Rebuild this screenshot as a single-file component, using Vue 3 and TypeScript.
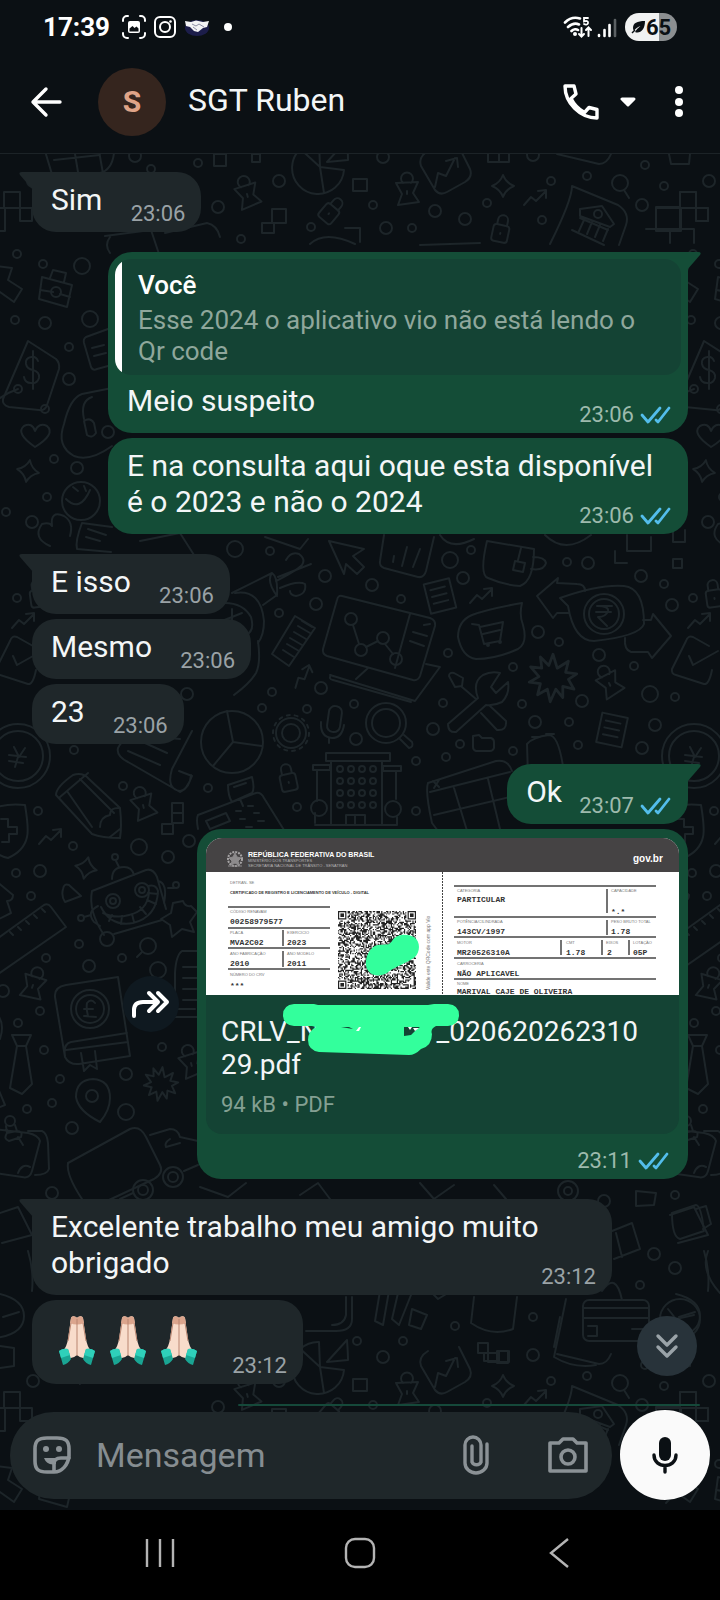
<script setup lang="ts">
interface Message {
  id: number
  side: 'in' | 'out'
  kind: 'plain' | 'quote' | 'emoji' | 'doc'
  first?: boolean
  text: string
  time: string
}

const messages: Message[] = [
  { id: 1, side: 'in', kind: 'plain', first: true, text: 'Sim', time: '23:06' },
  { id: 2, side: 'out', kind: 'quote', first: true, text: 'Meio suspeito', time: '23:06' },
  { id: 3, side: 'out', kind: 'plain', text: 'E na consulta aqui oque esta disponível é o 2023 e não o 2024', time: '23:06' },
  { id: 4, side: 'in', kind: 'plain', first: true, text: 'E isso', time: '23:06' },
  { id: 5, side: 'in', kind: 'plain', text: 'Mesmo', time: '23:06' },
  { id: 6, side: 'in', kind: 'plain', text: '23', time: '23:06' },
  { id: 7, side: 'out', kind: 'plain', first: true, text: 'Ok', time: '23:07' },
  { id: 8, side: 'out', kind: 'doc', text: '', time: '23:11' },
  { id: 9, side: 'in', kind: 'plain', first: true, text: 'Excelente trabalho meu amigo muito obrigado', time: '23:12' },
  { id: 10, side: 'in', kind: 'emoji', text: '', time: '23:12' },
]

type Dot = [number, number, number]
const dots: Dot[] = [
  [135, 155, 6], [151, 168, 4], [198, 162, 4], [279, 180, 6], [218, 206, 6], [311, 226, 4], [241, 238, 4],
  [383, 156, 6], [373, 204, 4], [435, 210, 6], [465, 218, 6], [487, 202, 4], [551, 180, 4], [587, 175, 4],
  [542, 219, 4], [386, 227, 6], [412, 227, 4], [533, 154, 6], [645, 164, 4], [664, 185, 4], [642, 204, 6],
  [17, 253, 4], [43, 263, 4], [82, 265, 8], [15, 319, 4], [45, 322, 6], [90, 318, 8], [69, 346, 4], [69, 378, 6],
  [45, 408, 4], [54, 458, 4], [77, 467, 6], [47, 496, 4], [6, 511, 4], [32, 521, 6], [33, 180, 6],
  [235, 548, 8], [270, 550, 4], [325, 575, 6], [372, 584, 6], [401, 598, 4], [316, 603, 6], [279, 612, 4],
  [450, 559, 8], [471, 549, 4], [463, 577, 6], [567, 561, 4], [588, 562, 6], [641, 575, 6], [664, 583, 4],
  [672, 604, 6], [17, 597, 4], [538, 631, 6], [559, 641, 4], [599, 654, 6], [634, 665, 4], [448, 652, 4],
  [513, 666, 4], [650, 693, 8], [675, 696, 4], [582, 700, 6], [522, 703, 4], [535, 721, 6], [569, 721, 4],
  [655, 724, 6], [578, 744, 4], [642, 747, 6], [443, 702, 4], [433, 728, 6], [460, 743, 4], [446, 756, 4],
  [513, 750, 4], [416, 760, 4], [416, 810, 4], [354, 703, 4], [356, 738, 6], [307, 708, 4], [262, 707, 4],
  [272, 691, 4], [321, 687, 6], [297, 806, 4], [187, 693, 6], [208, 787, 4], [74, 749, 4], [123, 785, 4], [38, 810, 4],
  [73, 845, 4], [139, 846, 8], [168, 856, 6], [189, 840, 6], [16, 872, 4], [40, 870, 6], [31, 895, 4],
  [79, 943, 4], [46, 957, 4], [89, 965, 6], [122, 957, 4], [158, 969, 8], [3, 990, 6], [40, 1010, 4],
  [18, 1022, 4], [44, 1049, 4], [162, 1046, 4], [60, 1078, 4], [52, 1102, 4], [27, 1108, 4], [126, 1073, 6],
  [126, 1111, 8], [72, 1127, 6], [52, 1192, 6], [640, 1284, 4], [654, 1253, 6], [675, 1267, 6], [675, 1194, 4],
  [604, 1200, 6], [533, 1316, 4], [455, 1325, 4], [403, 1340, 4], [357, 1340, 4],
]

interface Place { use: string; x: number; y: number; r: number; s: number }
const places: Place[] = [
  { use: 'clip', x: 247, y: 193, r: -15, s: 1 }, { use: 'clip', x: 407, y: 190, r: 0, s: 1 },
  { use: 'clip', x: 609, y: 682, r: -25, s: 1 }, { use: 'clip', x: 143, y: 804, r: -15, s: 1 },
  { use: 'clip', x: 33, y: 984, r: 20, s: 1 }, { use: 'clip', x: 191, y: 1062, r: -15, s: 1 },
  { use: 'trend', x: 535, y: 196, r: 0, s: 1 }, { use: 'trend', x: 481, y: 594, r: 0, s: 1 },
  { use: 'trend', x: 23, y: 619, r: 0, s: 1 }, { use: 'trend', x: 302, y: 675, r: -25, s: 1 },
  { use: 'trend', x: 50, y: 835, r: 0, s: 1 }, { use: 'lock', x: 501, y: 229, r: 12, s: 1 },
  { use: 'lock', x: 331, y: 210, r: 40, s: 1 }, { use: 'lock', x: 288, y: 778, r: -12, s: 1 },
  { use: 'lock', x: 38, y: 594, r: -8, s: 1 }, { use: 'spark', x: 503, y: 185, r: 0, s: 1 },
  { use: 'spark', x: 86, y: 867, r: 12, s: 1 }, { use: 'spark', x: 28, y: 470, r: 10, s: 1 },
  { use: 'burst', x: 553, y: 677, r: 0, s: 1.4 }, { use: 'burst', x: 161, y: 1083, r: 5, s: 1 },
  { use: 'note', x: 440, y: 595, r: -14, s: 1 }, { use: 'note', x: 612, y: 729, r: 12, s: 1 },
]

// Repeats of the wallpaper tile, one screen apart in each direction.
const tiles = [[0, 0], [676, 0], [0, 1200], [676, 1200]]

// Deterministic noise for the code area of the document preview.
const QR = 65
let seed = 20241
const cells: string[] = []
for (let y = 0; y < QR; y++) {
  for (let x = 0; x < QR; x++) {
    seed = (seed * 1103515245 + 12345) % 2147483648
    const corner = (x < 8 && y < 8) || (x > QR - 9 && y < 8) || (x < 8 && y > QR - 9)
    if (!corner && seed / 2147483648 < 0.52) cells.push(`M${x} ${y}h1v1h-1z`)
  }
}
const qrPath = cells.join('')
const finders = [[0, 0], [QR - 7, 0], [0, QR - 7]]

const rulesLeft = [69, 90, 110, 131]
const rulesRight = [48, 79, 99, 120, 141]
const labels = [
  [24, 75, 'CÓDIGO RENAVAM'], [24, 96, 'PLACA'], [81, 96, 'EXERCÍCIO'], [24, 117, 'ANO FABRICAÇÃO'],
  [81, 117, 'ANO MODELO'], [24, 138, 'NÚMERO DO CRV'], [251, 54, 'CATEGORIA'], [405, 54, 'CAPACIDADE'],
  [251, 85, 'POTÊNCIA/CILINDRADA'], [405, 85, 'PESO BRUTO TOTAL'], [251, 106, 'MOTOR'], [360, 106, 'CMT'],
  [400, 106, 'EIXOS'], [427, 106, 'LOTAÇÃO'], [251, 127, 'CARROCERIA'], [251, 147, 'NOME'],
] as [number, number, string][]
const values = [
  [24, 86, '00258979577'], [24, 107, 'MVA2C02'], [81, 107, '2023'], [24, 128, '2010'], [81, 128, '2011'],
  [24, 150, '***'], [251, 64, 'PARTICULAR'], [405, 76, '*.*'], [251, 96, '143CV/1997'], [405, 96, '1.78'],
  [251, 117, 'MR20526310A'], [360, 117, '1.78'], [401, 117, '2'], [427, 117, '05P'],
  [251, 138, 'NÃO APLICAVEL'], [251, 156, 'MARIVAL CAJE DE OLIVEIRA'],
] as [number, number, string][]
</script>

<template>
  <div class="phone">
    <div class="status">
      <span class="clock">17:39</span>
      <svg class="s-ic" width="24" height="24" viewBox="0 0 24 24" fill="none" stroke="#fff" stroke-width="2" stroke-linecap="round">
        <path d="M1 6V5a4 4 0 0 1 4-4h1M18 1h1a4 4 0 0 1 4 4v1M23 18v1a4 4 0 0 1-4 4h-1M6 23H5a4 4 0 0 1-4-4v-1" />
        <rect x="6" y="6" width="12" height="12" rx="2" fill="#fff" stroke="none" />
        <path d="M7.500 16.500v-3l3-2.500 2 2 2-1.500 2 2v3z" fill="#0b1014" stroke="none" />
      </svg>
      <svg class="s-ic insta" width="22" height="22" viewBox="0 0 22 22" fill="none" stroke="#fff" stroke-width="2">
        <rect x="1" y="1" width="20" height="20" rx="5" /><circle cx="11" cy="11" r="5" /><circle cx="16.500" cy="5.500" r="1.300" fill="#fff" stroke="none" />
      </svg>
      <svg class="s-ic shake" width="26" height="20" viewBox="0 0 26 20">
        <ellipse cx="13" cy="11" rx="12" ry="8" fill="#1c1d4a" />
        <path d="M1 4l6 1 5-1.500L19 5l6-1-2 6-4 1-5 4-4-1-4-4-4-1z" fill="#f2f2f4" />
        <path d="M8 7l4 2 3-2 5 3M9 10l4 3" stroke="#8d8ea5" fill="none" />
      </svg>
      <span class="dot"></span>
      <span class="grow"></span>
      <svg width="30" height="24" viewBox="0 0 30 24" fill="none" stroke="#fff" stroke-width="2.600" stroke-linecap="round">
        <path d="M2 7.500C7 2.500 12 2 17 3.500M5 12c4-3.500 8-4 11-2.500M8.500 16c2-2 5-2 6.500-1" />
        <circle cx="12" cy="19" r="2" fill="#fff" stroke="none" />
        <path d="M25 3h-4v3.500c3-1.200 4.500 0 4 1.800-.4 1.500-2.500 1.700-4 .7" stroke-width="1.800" />
        <path d="M18.500 13v8M16 19l2.500 2.500L21 19M25.500 21v-8M23 15l2.500-2.500L28 15" stroke-width="2" />
      </svg>
      <svg class="bars" width="20" height="22" viewBox="0 0 20 22" stroke-width="2.600" stroke-linecap="round" stroke="#fff">
        <path d="M2 19v1M7.500 14v6M12.500 9v11" /><path d="M18 4v16" stroke="#5b6063" />
      </svg>
      <span class="battery">
        <svg width="15" height="14" viewBox="0 0 15 14"><path d="M14 1C6 1 2 3 2 8c0 1 .3 2 1 2.800C5 8 7 7 9.500 6 7 8 5.500 9.500 4 12c5 2 10-2 10-11z" fill="#0b1014" /><path d="M1 13l3-3" stroke="#0b1014" stroke-width="1.500" /></svg>65
      </span>
    </div>

    <header class="bar">
      <button class="icon back" aria-label="Voltar">
        <svg width="32" height="32" viewBox="0 0 32 32" fill="none" stroke="#fff" stroke-width="3.400" stroke-linecap="round" stroke-linejoin="round"><path d="M30 16H3M16 3L3 16l13 13" /></svg>
      </button>
      <span class="avatar">S</span>
      <h1 class="name">SGT Ruben</h1>
      <button class="icon call" aria-label="Ligar">
        <svg width="36" height="36" viewBox="0 0 36 36" fill="none" stroke="#fff" stroke-width="3.400" stroke-linejoin="round"><path d="M2 2h9l2 8-5 4.500c3 6 7 10.500 13.500 14l4.500-5 8 2V34C17 34 2 19 2 2z" /></svg>
      </button>
      <button class="icon more" aria-label="Opções de chamada">
        <svg width="16" height="10" viewBox="0 0 16 10"><path d="M2 2h12L8 8z" fill="#fff" stroke="#fff" stroke-width="3" stroke-linejoin="round" /></svg>
      </button>
      <button class="icon" aria-label="Menu">
        <svg width="10" height="34" viewBox="0 0 10 34" fill="#fff"><circle cx="5" cy="5" r="4" /><circle cx="5" cy="17" r="4" /><circle cx="5" cy="28" r="4" /></svg>
      </button>
    </header>

    <main class="chat">
      <svg class="wallpaper" viewBox="0 153 720 1357" preserveAspectRatio="xMidYMin slice" aria-hidden="true">
        <defs>
          <g id="clip"><path d="M-4-8a6 6 0 1 1 8 0M-11-8L11-9 6 2l6 9-21 3 4-11zM0 0v3" /></g>
          <g id="trend"><path d="M-11 8L-4 0 1 4l9-9M3-6l8-1v8" /></g>
          <g id="lock"><rect x="-8" y="-5" width="16" height="17" rx="3" /><path d="M-5-5v-5a5 5 0 0 1 10 0v5M0 3v1" /></g>
          <g id="spark"><path d="M0-11Q3-3 11 0 3 3 0 11-3 3-11 0-3-3 0-11z" /></g>
          <g id="burst"><path d="M0-17l3 10 8-5-2 8 8 1-6 4 4 7-8-2 0 8-5-6-4 9-2-9-7 4 2-8-8-1 7-4-6-7 8 1-1-8 6 6z" /></g>
          <g id="note"><path d="M-13-15L13-15V15H-13zM-8-8H7M-8-1H7M-8 6H7" /></g>
          <g id="tile">
            <circle v-for="(d, i) in dots" :key="i" :cx="d[0]" :cy="d[1]" :r="d[2]" />
            <use v-for="(p, i) in places" :key="'p' + i" :href="'#' + p.use" :transform="`translate(${p.x} ${p.y}) rotate(${p.r}) scale(${p.s})`" />
            <!-- top band -->
            <path d="M45 150l9 30M54 159l46-5M75 153l5 30M99 150l5 28M45 172h55q12-3 14-20" />
            <path d="M319 141a26 26 0 1 0 25 28L320 166zM320 166l4 26M320 166l-24-22M327 161l20-22q1 14 1 20z" />
            <path d="M214 153h12v12h-12zM252 153h8v8h-8zM272 208h14v14h-14zM262 222h12v10h-12zM353 178h14v12h-14zM345 227h15v14" />
            <path d="M428 150q-10 6-7 15l14 24q5 6 12 2l18-10q8-5 5-13l-11-22M435 186l3-14 8 3 9-18M446 160l11-3 1 9M488 150v11h21v-11M499 150v11" />
            <path d="M557 153l42 10q8 0 12-10M669 153l2 10h18l1-10" />
            <circle cx="620" cy="182" r="8" /><path d="M624 189l5 8" />
            <path d="M572 185q0 14-22 58M572 185l46 19q12 8 8 20l-7 20M580 208l22-3 12 18-4 3-30-11zM580 217l28 12M584 219l-5 11M592 221l-5 12M600 224l-5 12M608 228l-5 12M572 229l32 15" />
            <circle cx="598" cy="213" r="4" />
            <path d="M4 191h16v16H4zM20 207h12v13H20zM-20 207h25v23h-25zM656 206h24v22h-24zM680 191h16v16h-16zM646 228h24v14M696 207h12v13h-12zM670 228h24v14" />
            <path d="M105 235l46-6 8 24M110 236q-6 8 0 16M165 232l42-10q10 2 13 14M310 243q15-14 45 0M420 244l60-2" />
            <!-- upper sides -->
            <path d="M42 276l30 8-5 22-28-8zM50 277l3-8 13 3-2 9M40 289l13 2M60 293l10 3" /><circle cx="56" cy="291" r="5" />
            <path d="M-4 265l16 2-4 12 14 9-8 13-14-10-10 11" />
            <path d="M28 340l28 18q4 4 3 10l-12 36q-2 6-8 5L9 406q-7-2-6-8z" /><circle cx="18" cy="388" r="4" /><path d="M18 388Q6 392-4 400" />
            <path d="M38 360q-2-5-7-4-6 1-5 7 1 5 7 6 7 2 6 8-2 6-8 5-6 0-7-6M33 350v38" />
            <path d="M108 328l-22 8q-3 2-2 6l7 24q2 4 6 2l11-3M92 347l12-3M94 355l12-3" />
            <path d="M112 387l-30 6q-12 4-18 30-8 22 10 32 16 6 38-10M92 396q-12 4-8 22M84 420q6-4 10 2l2 10q-4 6-9 2z" /><circle cx="108" cy="431" r="6" />
            <path d="M35 446q-20-14-11-21 8-4 11 5 4-9 12-5 9 8-12 21z" />
            <circle cx="81" cy="500" r="19" /><path d="M66 498q14 14 24-9M73 486l5 4M84 485l2 5" />
            <path d="M50 545q-18-8-8-22 8-2 10 2-2-16 12-10 10 6 6 20M112 526l-30-4q-7 18-5 26l34 3M88 528l18 6M86 536l14 4" />
            <path d="M140 540l40-8 14 22M265 536l35 12 8-10M440 534q10 16 34 4M545 534q20 20 46 0" />
            <!-- centre -->
            <path d="M329 540l35 8-11 7 11 11-7 7-11-10-2 10zM384 534l-4 26q-1 5 4 7l34 9q6 1 8-6l8-34M394 555l-1 6M407 546l-5 19M420 548l-7 18" />
            <path d="M487 540l47 8q0 32-14 37-16-1-32-8-9-3-1-37zM521 547l-3 12M515 560l10 2-2 9-10-2zM533 556q12 0 13 6-2 8-15 6" />
            <path d="M615 550v12h12M627 534v16h24v-14M673 529v12h12v-12M673 558h9v9h-9z" />
            <path d="M232 592l40-20q6 4 5 22l-14 10M272 572q-6 8 5 23M278 576l33-13M276 580q20-10 26-16 4-6-3-11-8-3-13 6M280 587q18-8 25-4 2 10-9 12-6-1-6-5" />
            <path d="M235 592q26-4 29 28 0 14-6 22M225 602q18 0 26 14 4 14-5 18M232 608v28M222 620l20-8M258 640q3 22-2 32-6 10-22 22" />
            <path d="M295 615l20 12-26 38-17-12zM287 643l12 7M290 637l12 7M294 631l12 7M298 625l12 7M302 620l10 6M283 649l11 7" />
            <path d="M342 595l88 22q6 2 5 8l-15 50q-2 5-7 4l-86-24q-5-2-4-7l14-49q1-5 5-4zM410 613l-15 54M413 631l14 4M410 640l14 5M424 624l6-1M368 667l-12 11M330 674l85 26 25-34-14-3M331 674q-3 4 2 5l78 22" />
            <circle cx="351" cy="618" r="6" /><circle cx="361" cy="649" r="6" /><circle cx="383" cy="637" r="6" /><circle cx="396" cy="658" r="6" /><path d="M353 624l6 19M366 646l12-6M385 643l8 10" />
            <path d="M522 602q-34 6-50 12-14 6-14 22 4 20 18 22 20 0 42-10 10-6 5-24-4-10-1-22zM472 623l7 1 5 19 16-3 3-19-23 5M483 633l17-4" /><circle cx="488" cy="644" r="1" /><circle cx="500" cy="641" r="1" />
            <path d="M585 590q0-7-8-7l-20-1 1-5-21 18 16 22 4-5h12M560 597q40-14 64-12 20 2 20 38-4 12-50 17-20 0-26-35zM643 619h8l2-6 18 22-19 22-4-6h-17q-7-2-6-14" />
            <circle cx="604" cy="613" r="20" /><circle cx="604" cy="613" r="15" /><path d="M597 605h15M596 611h15M597 605q12 0 11 5-2 6-10 6l9 9" />
            <path d="M33 645L17 636q-5-2-7 4L-4 668q-1 5 4 6l28 9q5 1 8-14M13 655l4 9 25-14" />
            <path d="M449 675q0-4 5-3l9 5-1 8-7 1zM462 686l14 12M478 697q-6-16 5-23 8-4 17-2l-9 14 5 6 12-11q2 12-6 20-8 4-16 3l-30 27q-8 1-8-8zM481 712l16 17q10 1 9-9l-16-15" />
            <circle cx="232" cy="741" r="31" /><path d="M233 741l-6-31M233 741l29 4M233 741l-20 24" />
            <circle cx="291" cy="732" r="9" /><circle cx="291" cy="732" r="15" /><circle cx="291" cy="732" r="18" stroke-dasharray="3 5" />
            <rect x="328" y="705" width="13" height="26" rx="6" transform="rotate(8 334 718)" /><path d="M321 721q-1 15 11 16 10 0 12-13M329 737v5" />
            <circle cx="386" cy="722" r="20" /><circle cx="386" cy="722" r="14" /><path d="M400 738l9 9q5-1 3-6l-8-7" />
            <path d="M473 735l6-1 3 3h9q3 1 3 4v6q-1 3-4 3h-14q-3-1-3-4zM528 775l-1-32q6-7 22-9 10 0 15 38M532 736h8M546 733h8" />
            <path d="M326 752h64v8h-64zM331 761v62M382 761v62M313 764h17v5h-17zM383 765h18v5h-18zM317 770v30M396 770v28M315 824h82v-8M346 824v-10h19v10M355 814v10M315 812v10" />
            <g v-for="r in 4" :key="r"><circle v-for="c in 4" :key="c" :cx="329 + c * 11" :cy="756 + r * 12" r="3" /></g>
            <circle cx="319" cy="807" r="8" /><circle cx="393" cy="808" r="8" />
            <path d="M428 782l68-22q12-2 16 10M428 782q-3 8 4 40l6 8M430 791l80-20M454 787l14 46M488 778l12 50M434 814l84-20M433 780l6 6M439 779l-5 8" />
            <path d="M228 784l24-8q3 12 0 16l-20 9q-4-6-4-17zM234 786l12-4M240 798l3 7M198 828q-2-10 0-14l58-22q5-1 8 5l20 32M206 820l20-8 4 8-20 8zM236 810h5M248 805h5M240 818h5M254 812h5M258 820h6M246 826h6" />
            <!-- lower left -->
            <circle cx="18" cy="755" r="32" /><circle cx="18" cy="755" r="25" /><path d="M14 746l5 10 6-9M18 756l-3 10M9 754l17 2M9 760l14 2" />
            <path d="M180 738l-34-3q-20-4-28 12-2 8 10 14l52 30q10-4 11-17M128 750l32 14M145 742l22 10M192 730l-20 38q-6 20 8 22 6 0 12-15l-13-5" />
            <path d="M-8 808q14-6 33-4 4 24 2 32-3 14-19 21-10-2-16-10M1 818h7v8h9v7H9v8H2" />
            <path d="M56 794q0-8 17-20 10-3 16 4l31 29q2 18 0 30-18 0-28-4zM60 796l28-24M67 790l25 36M80 778l34 34M100 826q0-10 10-12 0-8 10-7M110 836l10-8" />
            <path d="M172 802h11v20h-11zM172 812h11M162 823h11v10h-11z" />
            <path d="M63 888q1-6 6-4l12 11-16 6q-4-6-2-13zM-4 880l17 14q0 6-6 6l4 12-16 8" />
            <path d="M-6 940l50-36q4-2 7 2l15 20-72 50M10 931l3 3M18 926l3 3M26 920l3 3M34 914l3 3M42 908l3 3" />
            <path d="M92 890l54-21q7-2 11 7l9 32M92 890q-4 20 12 44M114 933l48-14M112 878q0-12 12-12 8 0 10 8M116 860l3 6M98 905q-12 6-4 16l6 4M158 880q10 2 6 22M168 887h6M84 916l7-2" />
            <circle cx="115" cy="856" r="3" /><circle cx="176" cy="884" r="3" /><circle cx="81" cy="917" r="3" /><circle cx="107" cy="938" r="7" /><circle cx="113" cy="900" r="7" /><circle cx="113" cy="900" r="3" /><circle cx="142" cy="889" r="7" /><circle cx="142" cy="889" r="3" />
            <path d="M101 906q10 20 32 16 24-6 25-32-2-7-10-5M103 912q12 6 26 2 18-4 20-22M112 914l-3 6M122 915l-1 8M132 913l2 8M140 906l6 7M147 899l9 4M148 892l10 1" />
            <path d="M183 900q2 6 8 5l6 6-7 10 4 10-12-3-10 8-2-12-9-6 10-6 2-10z" /><circle cx="148" cy="945" r="8" /><path d="M142 951l-5 5" />
            <path d="M118 976l-52 8q-12 2-11 12l10 60q4 8 14 7l51-8zM127 1032l-56 9q-8 2-6 14M66 1049l62-8M81 1052l3 18 6-6 7 4-2-18" /><circle cx="90" cy="1008" r="19" /><circle cx="90" cy="1008" r="14" /><path d="M95 1002q-4-5-8 0-1 5 1 13h-4l12 1M84 1008h9" />
            <path d="M200 950h-18q-6 4-7 22v44h25M183 966h17M183 977h17M183 988h17M183 999h17M175 1008h20" />
            <path d="M12 1034h19l-5 11h-9zM17 1045l-7 42 12 6 10-10-6-38M-6 1010q12 10 6 28M-5 1080l10 24-10 4" />
            <path d="M100 1121q10-12 10-24 0-18-17-19-17 1-17 18 2 14 24 25z" /><circle cx="92" cy="1095" r="6" />
            <circle cx="10" cy="1120" r="5" /><path d="M6 1125l1 7 10-2-2-6M7 1132q-4 6 2 8l12-4q2-6-4-6M18 1136l5 8M-6 1128l34 4q10 2 12 8l-8 30q-2 8-10 6l-28-4M28 1130h14q5 2 6 12l1 26q-2 6-14 6M18 1172q4-10 12-6" />
            <path d="M68 1162l62-34q10-4 16 8l14 28q4 8-6 14l-60 28M68 1162q-2 12 14 36M150 1134l20-6q8 0 10 8l18 4M170 1138q-6 4-4 8l14-4" /><circle cx="143" cy="1189" r="10" /><circle cx="143" cy="1189" r="5" /><circle cx="173" cy="1176" r="10" /><circle cx="173" cy="1176" r="5" />
            <path d="M184 1170l14-6M120 1198l13-6" />
            <!-- lower band -->
            <path d="M200 1186l28 10 18-14M300 1194l18-12 12 16M420 1182l14 16 20-14M494 1184l12 14M636 1190l20 2-2 12-18 1z" /><circle cx="568" cy="1190" r="10" /><circle cx="568" cy="1190" r="4" />
            <path d="M-6 1214l24-8 14 28-30 8M672 1212l24-8q5 0 8 26l-24 8q-8-2-8-26zM696 1208l10-3 5 18-8 5M612 1230l20-8 8 26-26 10M616 1232l6 24" />
            <path d="M0 1293q24 6 24 22 0 18-28 22M3 1316l16-5M0 1345l14 2v18l-14 2M28 1250q6 20 4 40M708 1250q-8 20 12 42" />
            <path d="M380 1290l-5 30 8 4 6-34M398 1292l-6 26 7 6 12-30M412 1308l15 6-6 14-12-4zM474 1296l-3 26q20 14 42 6l4-32M430 1290l8 8 10-6" />
            <path d="M352 1296v22q0 12-16 12h-30M346 1296v18q-2 10-14 10" />
            <rect x="583" y="1299" width="66" height="41" rx="6" /><path d="M583 1307h66M583 1317h66M588 1325h9v10h-9M632 1328h12M602 1290q14-20 20 9M566 1298q-6 30-12 58 20 12 42 8M560 1316l-6 30" />
            <circle cx="680" cy="1318" r="20" /><path d="M668 1308l8 10 18-4" />
            <path d="M478 1342h10v10h-10zM484 1352h13v8h-13zM497 1350h11v12h-11z" />
          </g>
        </defs>
        <g fill="none" stroke="#1d2529" stroke-width="2" stroke-linecap="round" stroke-linejoin="round">
          <use v-for="(t, i) in tiles" :key="i" href="#tile" :x="t[0]" :y="t[1]" />
        </g>
      </svg>

      <section class="list">
        <div v-for="m in messages" :key="m.id" class="row" :class="[m.side, { first: m.first }]">
          <button v-if="m.kind === 'doc'" class="forward" aria-label="Encaminhar">
            <svg width="38" height="28" viewBox="0 0 38 28" fill="none" stroke="#fff" stroke-width="4" stroke-linecap="round" stroke-linejoin="round"><path d="M2 26v-6q0-8 9-8h14M17 3l9 9-9 9M26 3l9 9-9 9" /></svg>
          </button>
          <article class="bubble" :class="[m.side, m.kind, { tail: m.first }]">
            <blockquote v-if="m.kind === 'quote'" class="cite">
              <strong>Você</strong>
              <p>Esse 2024 o aplicativo vio não está lendo o Qr code</p>
            </blockquote>

            <div v-if="m.kind === 'doc'" class="card">
              <svg class="thumb" viewBox="0 0 473 157" role="img" aria-label="Prévia do documento">
                <rect width="473" height="157" fill="#fff" />
                <rect width="473" height="34" fill="#454344" />
                <circle cx="29" cy="21" r="7" fill="none" stroke="#a5a3a4" stroke-width="2" stroke-dasharray="2 1" />
                <path d="M29 15l2 4 4 1-3 3 1 4-4-2-4 2 1-4-3-3 4-1zM22 28h14" fill="#8d8b8c" stroke="#8d8b8c" />
                <g class="sans" fill="#fff">
                  <text x="42" y="19" font-size="7" font-weight="700">REPÚBLICA FEDERATIVA DO BRASIL</text>
                  <g fill="#b5b3b4" font-size="4"><text x="42" y="24">MINISTÉRIO DOS TRANSPORTES</text><text x="42" y="29">SECRETARIA NACIONAL DE TRÂNSITO - SENATRAN</text></g>
                  <text x="427" y="24" font-size="10" font-weight="700">gov.br</text>
                </g>
                <g class="sans" font-size="4" fill="#777">
                  <text x="24" y="46">DETRAN- SE</text>
                  <text x="24" y="56" font-weight="700" fill="#333">CERTIFICADO DE REGISTRO E LICENCIAMENTO DE VEÍCULO - DIGITAL</text>
                  <text v-for="(l, i) in labels" :key="i" :x="l[0]" :y="l[1]">{{ l[2] }}</text>
                  <text transform="translate(224 152) rotate(-90)" font-size="5">Valide este QRCode com app Vio</text>
                </g>
                <g stroke="#444" stroke-width="1.500">
                  <path v-for="y in rulesLeft" :key="y" :d="`M22 ${y}H124`" />
                  <path v-for="y in rulesRight" :key="y" :d="`M248 ${y}H450`" />
                  <path d="M77 92v16M77 113v16M401 51v24M401 82v15M355 102v15M396 102v15M423 102v15" />
                  <path d="M236.500 34V157" stroke-dasharray="2 1" stroke-width="1" />
                </g>
                <g class="mono" font-size="8" font-weight="700" fill="#333">
                  <text v-for="(v, i) in values" :key="i" :x="v[0]" :y="v[1]">{{ v[2] }}</text>
                </g>
                <g transform="translate(132 73) scale(1.200)" fill="#222">
                  <path :d="qrPath" />
                  <g v-for="(f, i) in finders" :key="i" :transform="`translate(${f[0]} ${f[1]})`">
                    <path d="M0 0h7v7H0zM1 1v5h5V1z" fill-rule="evenodd" /><rect x="2" y="2" width="3" height="3" />
                  </g>
                </g>
                <path d="M172 107c8-1 11 1 14-4 4-7 14-8 22-4 7 5 6 15 1 20-7 6-20 9-28 16-9 5-20 2-21-8-1-8 4-19 12-20z" fill="#33ff9c" />
              </svg>
              <div class="file">
                <div class="fname">CRLV_N<span class="hidden"></span>_020620262310<br />29.pdf
                  <svg class="scribble" width="178" height="52" viewBox="0 0 178 52" aria-hidden="true">
                    <path d="M36 22l14-6h60l16 12-10 8H46zM134 21h16" fill="#33ff9c" />
                    <path d="M11 0h20l4 1h110l6-1h14q11 1 11 11t-11 11h-12q-6 3-4 8 0 12-11 15-6 6-12 6l-90-3q-11-2-11-12 0-9 8-13l-4-1H11Q0 21 0 11 0 1 11 0z" fill="#33ff9c" />
                    <path d="M58 23l12 2-4-2zM121 23h16l-4 3-5 5-7 1z" fill="#144334" />
                    <path d="M73 27l3-4h2l-2 4zM125 23h4l-2 3zM130 24h6l-4 3z" fill="#fff" />
                  </svg>
                </div>
                <div class="fsize">94 kB • PDF</div>
              </div>
            </div>

            <div class="body">
              <p v-if="m.kind === 'emoji'" class="text hands" role="img" aria-label="Mãos em oração">
                <svg v-for="n in 3" :key="n" width="51" height="51" viewBox="0 0 51 51">
                  <path d="M20 4q1-3 5-1l1 1 1-1q4-2 5 1l3 21q1 7 5 12l-5 7q-5 1-9-3-4 4-9 3l-5-7q4-5 5-12z" fill="#f8dccb" />
                  <path d="M20 4q1-3 5-1l1 1 1-1q4-2 5 1l1 5q-7 3-14 0z" fill="#dba58d" />
                  <path d="M26 5v37M20 9l-3 18M32 9l3 18" stroke="#b98570" stroke-width="1" fill="none" />
                  <path d="M8 37q4-3 9-2l3 10q-3 5-8 6zM44 37q-4-3-9-2l-3 10q3 5 8 6z" fill="#1aa593" />
                  <path d="M8 37q4-3 9-2l2 6-9 3zM44 37q-4-3-9-2l-2 6 9 3z" fill="#2fd0ba" />
                </svg><span class="space"></span>
              </p>
              <p v-else-if="m.kind !== 'doc'" class="text">{{ m.text }}<span class="space"></span></p>
              <div class="meta">
                <time>{{ m.time }}</time>
                <svg v-if="m.side === 'out'" width="31" height="18" viewBox="0 0 31 18" fill="none" stroke="#53bdeb" stroke-width="2.800" stroke-linecap="round" stroke-linejoin="round" aria-label="Lida"><path d="M2 9l6 7L20 2M16 14l2 2L29 2" /></svg>
              </div>
            </div>
          </article>
        </div>
        <div class="next"></div>
      </section>

      <button class="down" aria-label="Ir para o fim">
        <svg width="24" height="26" viewBox="0 0 24 26" fill="none" stroke="#9aa3a8" stroke-width="3.400" stroke-linecap="round" stroke-linejoin="round"><path d="M3 3l9 9 9-9M3 14l9 9 9-9" /></svg>
      </button>

      <form class="composer" @submit.prevent>
        <div class="pill">
          <button type="button" class="icon" aria-label="Figurinhas">
            <svg width="40" height="40" viewBox="0 0 40 40" fill="none" stroke="#8b9296" stroke-width="3.600" stroke-linecap="round" stroke-linejoin="round">
              <path d="M22 37h-7C6 37 3 34 3 26V14C3 6 6 3 15 3h10c9 0 12 3 12 11v7C36 30 30 37 22 37z" /><path d="M22 36v-7q0-6 7-6h8" />
              <circle cx="14" cy="14" r="3" fill="#8b9296" stroke="none" /><circle cx="27" cy="14" r="3" fill="#8b9296" stroke="none" /><path d="M12 23h12v6q-9 2-12-6z" fill="#8b9296" stroke="none" />
            </svg>
          </button>
          <input class="field" type="text" placeholder="Mensagem" aria-label="Mensagem" />
          <button type="button" class="icon clipbtn" aria-label="Anexar">
            <svg width="26" height="40" viewBox="0 0 26 40" fill="none" stroke="#8b9296" stroke-width="3.400" stroke-linecap="round"><path d="M24 9v19a11 10 0 0 1-22 0V10a8 8 0 0 1 16 0v17a5 5 0 0 1-9 0V11" /></svg>
          </button>
          <button type="button" class="icon" aria-label="Câmera">
            <svg width="40" height="36" viewBox="0 0 40 36" fill="none" stroke="#8b9296" stroke-width="3.600" stroke-linejoin="round"><path d="M2 6h9l4-4h10l4 4h9v28H2z" /><circle cx="20" cy="20" r="7" /></svg>
          </button>
        </div>
        <button type="button" class="mic" aria-label="Gravar áudio">
          <svg width="28" height="38" viewBox="0 0 28 38" fill="none" stroke="#0b1014" stroke-width="3.400" stroke-linecap="round"><rect x="8" y="1" width="12" height="24" rx="6" fill="#0b1014" stroke="none" /><path d="M3 19c0 14 22 14 22 0M14 30v6" /></svg>
        </button>
      </form>
    </main>

    <nav class="nav">
      <button class="icon" aria-label="Recentes"><svg width="30" height="30" viewBox="0 0 30 30" stroke="#b4b4b4" stroke-width="2.400"><path d="M2 1v28M15 1v28M28 1v28" /></svg></button>
      <button class="icon" aria-label="Início"><svg width="32" height="32" viewBox="0 0 32 32" fill="none" stroke="#b4b4b4" stroke-width="2.400"><rect x="2" y="2" width="28" height="28" rx="9" /></svg></button>
      <button class="icon" aria-label="Voltar"><svg width="30" height="30" viewBox="0 0 30 30" fill="none" stroke="#b4b4b4" stroke-width="2.400"><path d="M23 1L6 15l17 14" /></svg></button>
    </nav>
  </div>
</template>

<style>
body {
  margin: 0;
  background: #000;
}
</style>

<style scoped>
.phone {
  min-height: 100vh;
  display: flex;
  flex-direction: column;
  background: #0b1014;
  color: #f3f6f7;
  font-family: Roboto, "Liberation Sans", sans-serif;
}
button {
  padding: 0;
  border: 0;
  background: none;
  font: inherit;
  color: inherit;
}
svg { display: block; }
p, h1, blockquote { margin: 0; }
.icon {
  display: flex;
  align-items: center;
  justify-content: center;
}
.status {
  height: 52px;
  box-sizing: border-box;
  padding: 2px 43px 0 43px;
  display: flex;
  align-items: center;
  color: #fff;
}
.clock {
  font-size: 26px;
  font-weight: 700;
  margin-right: 12px;
}
.insta { margin-left: 8px; }
.shake { margin-left: 8px; }
.dot {
  width: 8px;
  height: 8px;
  border-radius: 50%;
  background: #fff;
  margin-left: 14px;
}
.grow { flex: 1; }
.bars { margin: 0 8px 0 4px; }
.battery {
  display: flex;
  align-items: center;
  justify-content: center;
  width: 52px;
  height: 28px;
  border-radius: 14px;
  background: linear-gradient(90deg, #f1f2f2 65%, #8c8f91 65%);
  color: #0b1014;
  font-size: 22px;
  font-weight: 700;
}
.bar {
  height: 102px;
  box-sizing: border-box;
  display: flex;
  align-items: center;
  padding: 0 36px 2px 30px;
  border-bottom: 1px solid #1c2327;
}
.avatar {
  width: 68px;
  height: 68px;
  border-radius: 50%;
  margin-left: 36px;
  background: #35251e;
  color: #dfa488;
  font-size: 30px;
  font-weight: 700;
  line-height: 68px;
  text-align: center;
}
.name {
  flex: 1;
  margin-left: 22px;
  font-size: 32px;
  font-weight: 400;
  line-height: 36px;
  padding-bottom: 4px;
}
.more { margin: 0 38px 0 21px; }
.chat {
  position: relative;
  flex: 1;
  display: flex;
  flex-direction: column;
  overflow: hidden;
}
.wallpaper {
  position: absolute;
  inset: 0;
  width: 100%;
  height: 100%;
}
.list {
  position: relative;
  flex: 1;
  display: flex;
  flex-direction: column;
  padding: 0 32px;
}
.row {
  display: flex;
  align-items: center;
  margin-top: 5px;
}
.row.first { margin-top: 20px; }
.row.first:first-child { margin-top: 18px; }
.row.out { justify-content: flex-end; }
.bubble {
  position: relative;
  max-width: 580px;
  border-radius: 24px;
}
.bubble.in { background: #1f272a; }
.bubble.out { background: #144d37; }
.bubble.in.tail { border-top-left-radius: 0; }
.bubble.out.tail { border-top-right-radius: 0; }
.bubble.tail::before {
  content: "";
  position: absolute;
  top: 0;
  width: 14px;
  height: 20px;
  background: inherit;
}
.bubble.in.tail::before {
  left: -13px;
  clip-path: path("M14 0H3Q-1 0 1 3L14 18z");
}
.bubble.out.tail::before {
  right: -13px;
  clip-path: path("M0 0H11Q15 0 13 3L0 18z");
}
.body {
  display: grid;
  padding: 0 16px 0 19px;
}
.out .body { padding-right: 17px; }
.doc.out .body { padding-right: 19px; }
.text {
  grid-area: 1 / 1;
  padding: 10px 0 14px;
  font-size: 30px;
  line-height: 36px;
}
.space {
  display: inline-block;
  width: 83px;
}
.out .space { width: 109px; }
.meta {
  grid-area: 1 / 1;
  align-self: end;
  justify-self: end;
  display: flex;
  align-items: center;
  gap: 6px;
  padding-bottom: 5px;
  font-size: 22px;
  line-height: 26px;
  color: #9aa2a6;
}
.out .meta { color: #9dbaad; }
.hands {
  display: flex;
  padding: 14px 0 19px;
}
.quote { padding-top: 7px; }
.quote .text { padding-top: 8px; }
.cite {
  margin: 0 7px;
  padding: 10px 16px 8px 23px;
  border-radius: 16px;
  background: linear-gradient(90deg, #fff 7px, #144334 7px);
  font-size: 26px;
  line-height: 31px;
  color: #8fa79c;
}
.cite strong {
  display: block;
  margin-bottom: 4px;
  font-weight: 500;
  line-height: 32px;
  color: #fff;
}
.forward {
  width: 56px;
  height: 56px;
  margin-right: 18px;
  border-radius: 50%;
  background: #0f1920;
  display: flex;
  align-items: center;
  justify-content: center;
}
.doc {
  width: 491px;
  padding-top: 9px;
}
.card {
  margin: 0 9px 14px;
  border-radius: 16px;
  overflow: hidden;
  background: #144334;
}
.thumb {
  width: 100%;
  height: auto;
}
.sans { font-family: "Liberation Sans", sans-serif; }
.mono { font-family: "Liberation Mono", monospace; }
.file { padding: 20px 15px 15px; }
.fname {
  position: relative;
  font-size: 28px;
  line-height: 33px;
  white-space: nowrap;
}
.hidden {
  display: inline-block;
  width: 117px;
}
.scribble {
  position: absolute;
  left: 62px;
  top: -11px;
}
.fsize {
  margin-top: 10px;
  font-size: 22px;
  line-height: 28px;
  color: #84a093;
}
.next {
  height: 2px;
  margin: 20px -12px 0 206px;
  border-radius: 1px;
  background: #15493a;
}
.down {
  position: absolute;
  right: 23px;
  bottom: 134px;
  width: 60px;
  height: 60px;
  border-radius: 50%;
  background: #28333a;
  display: flex;
  align-items: center;
  justify-content: center;
}
.composer {
  position: relative;
  display: flex;
  align-items: center;
  gap: 8px;
  padding: 3px 10px 10px;
}
.pill {
  flex: 1;
  min-width: 0;
  height: 87px;
  box-sizing: border-box;
  display: flex;
  align-items: center;
  padding: 0 24px 0 22px;
  border-radius: 44px;
  background: #1f272a;
}
.field {
  flex: 1;
  min-width: 0;
  margin-left: 24px;
  padding: 0;
  border: 0;
  outline: 0;
  background: none;
  color: #f3f6f7;
  font-family: inherit;
  font-size: 34px;
  line-height: 40px;
}
.field::placeholder {
  color: #868d91;
  opacity: 1;
}
.clipbtn { margin-right: 59px; }
.mic {
  width: 90px;
  height: 90px;
  border-radius: 50%;
  background: #fafafa;
  display: flex;
  align-items: center;
  justify-content: center;
}
.nav {
  height: 90px;
  box-sizing: border-box;
  padding: 0 60px 4px;
  display: grid;
  grid-template-columns: repeat(3, 1fr);
  background: #000;
}
</style>
